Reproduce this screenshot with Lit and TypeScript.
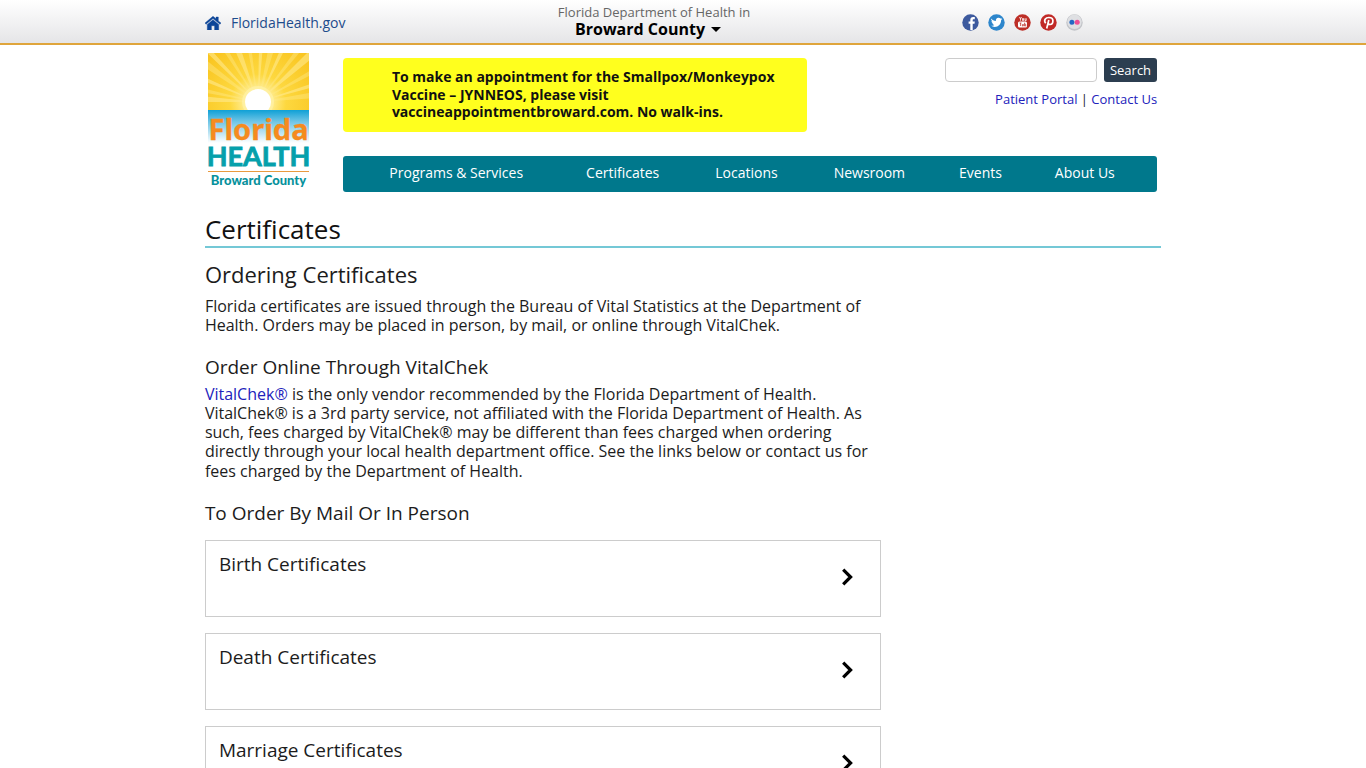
import { LitElement, html, css, svg } from "lit";
import { customElement } from "lit/decorators.js";

const sunRays = [183, 192, 203, 216, 226, 238, 249, 261, 273, 284, 295, 308, 318, 331, 343, 353].map((deg, i) => {
  const half = i % 3 === 0 ? 3 : 2;
  const p = (d: number) => {
    const t = (d * Math.PI) / 180;
    return `${50 + 120 * Math.cos(t)},${49 + 120 * Math.sin(t)}`;
  };
  return svg`<polygon points="50,49 ${p(deg - half)} ${p(deg + half)}" fill="#ffea8e" opacity=${i % 2 ? 0.4 : 0.6} />`;
});

@customElement("fh-logo")
class FhLogo extends LitElement {
  static styles = css`
    :host { display: block; }
    .logo { display: block; width: 101px; height: 138px; overflow: visible; }
    .florida { font-family: "Noto Sans", sans-serif; font-weight: 700; font-size: 29px; fill: #f58b1f; stroke: #f58b1f; stroke-width: 0.3; }
    .health { font-family: "Lato", sans-serif; font-weight: 700; font-size: 27px; fill: #05a0ab; stroke: #05a0ab; stroke-width: 0.8; }
    .county { font-family: "Lato", sans-serif; font-weight: 900; font-size: 13px; fill: #07919c; }
  `;
  render() {
    return html`<svg class="logo" viewBox="0 0 101 138" role="img" aria-label="Florida Health Broward County">
      <defs>
        <radialGradient id="sky" gradientUnits="userSpaceOnUse" cx="50" cy="49" r="70">
          <stop offset="0.15" stop-color="#fff0a0" /><stop offset="0.4" stop-color="#fdd83f" /><stop offset="1" stop-color="#f9c31d" />
        </radialGradient>
        <linearGradient id="sea" x1="0" y1="0" x2="0" y2="1">
          <stop offset="0" stop-color="#0fa0d6" /><stop offset="0.35" stop-color="#6fc5e6" /><stop offset="1" stop-color="#ffffff" />
        </linearGradient>
        <clipPath id="frame"><rect width="101" height="57" /></clipPath>
      </defs>
      <g clip-path="url(#frame)">
        <rect width="101" height="57" fill="url(#sky)" />
        ${sunRays}
        <circle cx="50" cy="49" r="16" fill="#fff3ad" opacity="0.6" />
        <circle cx="50" cy="49" r="13" fill="#fff" />
      </g>
      <rect y="57" width="101" height="33" fill="url(#sea)" />
      <text class="florida" x="50.5" y="87" text-anchor="middle">Florida</text>
      <text class="health" x="50.5" y="113" text-anchor="middle">HEALTH</text>
      <rect y="118" width="101" height="1" fill="#e99a3f" />
      <text class="county" x="50.5" y="132" text-anchor="middle">Broward County</text>
    </svg>`;
  }
}

const chevron = html`<svg class="chevron" viewBox="0 0 12 18" aria-hidden="true"><path d="M2.200 1.600 L9.600 9 L2.200 16.400" fill="none" stroke="#000" stroke-width="3.200"/></svg>`;

const social = [
  { name: "Facebook", bg: "#3d5a9e", art: svg`<path d="M8.300 16V9.800H6.600V7.400h1.700V5.900c0-1.900 1-2.900 2.900-2.900h1.600v2.300h-1.100c-.8 0-1 .3-1 .9v1.200h2.100l-.3 2.400h-1.800V16z" fill="#fff"/>` },
  { name: "Twitter", bg: "#2d86cc", art: svg`<path d="M3 4.600c1.300 1.500 3 2.300 4.900 2.400C7.500 4.900 9 3.500 10.700 3.700c.7 0 1.200.3 1.700.8l1.500-.6-.9 1.300 1.300-.3-1.200 1.300c.1 3.700-2.700 6.700-6.400 6.700-1.300 0-2.600-.4-3.600-1.100 1.200.1 2.300-.2 3.200-.9-1-.1-1.700-.7-2-1.600h.9c-1-.4-1.700-1.200-1.700-2.300l.9.300C3.300 6.600 3 5.600 3 4.600z" fill="#fff"/>` },
  { name: "YouTube", bg: "#bd2f27", art: svg`<rect x="4" y="7.500" width="9" height="6" rx="1.500" fill="#fff"/><path d="M5.500 3l1 2v1.700M7.500 3l-1 2M8.500 4.500h1v2h-1zM11 4.300v2.300h1.200V4.300" stroke="#fff" stroke-width=".8" fill="none"/><path d="M5.500 9h2M6.500 9v3M8.300 10v2h1V10M10.500 8.700V12h1.200v-1.800h-1" stroke="#bd2f27" stroke-width=".7" fill="none"/>` },
  { name: "Pinterest", bg: "#c12a27", art: svg`<path d="M6.700 14.500L8.800 6M5.700 9.200C3.300 6.200 5.500 3.500 8.900 3.500c2.400 0 4 1.300 4 3.300 0 2.200-1.200 3.700-2.900 3.700-1 0-1.600-.5-1.700-1" fill="none" stroke="#fff" stroke-width="1.700"/>` },
  { name: "Flickr", bg: "#c2c4c8", art: svg`<circle cx="8.500" cy="7.800" r="7.200" fill="#dfe0e3"/><circle cx="5.900" cy="8.300" r="2.500" fill="#2368c4"/><circle cx="11.200" cy="8.300" r="2.500" fill="#ed4f94"/>` },
];

const menu = ["Programs & Services", "Certificates", "Locations", "Newsroom", "Events", "About Us"];
const cards = ["Birth Certificates", "Death Certificates", "Marriage Certificates"];

@customElement("app-root")
class AppRoot extends LitElement {
  static styles = css`
    :host { display: block; height: 100vh; overflow: hidden; background: #fff; color: #1c1c1c; font-family: "Open Sans", sans-serif; font-size: 16px; line-height: 1.2; }
    * { box-sizing: border-box; }
    a { color: #2222bb; text-decoration: none; }
    h1, h2, h3, p { margin: 0; font-weight: 400; }
    .top { border-bottom: 2px solid #dfa53c; background: linear-gradient(#fff, #e5e5e7); }
    .wrap { width: 70%; margin: 0 auto; }
    .bar { display: grid; grid-template-columns: 1fr auto 1fr; height: 43px; }
    .home { display: flex; align-items: center; gap: 10px; font-size: 14px; line-height: 20px; color: #1d4c8c; padding-top: 3px; justify-self: start; }
    .house { width: 16px; height: 14px; }
    .county { display: flex; flex-direction: column; border: 0; padding: 4px 0 0; background: none; font: 13px/17px "Open Sans", sans-serif; color: #666; margin-right: 58px; }
    .county strong { display: flex; align-items: center; align-self: center; gap: 6px; padding-right: 12px; font-size: 16px; line-height: 17px; color: #000; }
    .caret { width: 10px; height: 5px; }
    .social { display: flex; gap: 9px; padding: 14px 78px 0 0; justify-self: end; }
    .social a { display: block; height: 17px; }
    .social svg { display: block; width: 17px; height: 17px; }
    .head { display: flex; padding: 8px 4px 0 3px; }
    .side { width: 135px; flex: none; }
    .main { flex: 1; padding-top: 5px; }
    .row { display: flex; justify-content: space-between; align-items: flex-start; }
    .alert { width: 57%; padding: 10px 24px 11px 49px; background: #ffff1e; border-radius: 4px; color: #111; font-size: 14px; line-height: 1.25; font-weight: 700; }
    .tools { text-align: right; font-size: 13px; line-height: 18px; }
    .search { display: flex; gap: 7px; margin-bottom: 8px; }
    .search input { width: 152px; height: 24px; border: 1px solid #ccc; border-radius: 4px; font: 13px "Open Sans", sans-serif; }
    .search button { height: 24px; padding: 0 6px; border: 0; border-radius: 3px; background: #2c3e50; color: #fff; font: 500 13px "Open Sans", sans-serif; }
    .nav { display: table; width: 100%; height: 36px; margin-top: 24px; padding: 0 15px 0 12px; background: #00788c; border-radius: 3px; font-size: 14px; }
    .nav a { display: table-cell; padding: 0 18px; vertical-align: middle; text-align: center; white-space: nowrap; color: #fff; font-weight: 500; }
    h1 { margin-top: 21px; padding-bottom: 1px; font-size: 26px; line-height: 32px; border-bottom: 2px solid #74c8d6; color: #111; }
    .content { width: 676px; max-width: 100%; }
    h2 { padding-top: 12px; margin-bottom: 8px; font-size: 22px; line-height: 29px; }
    h3 { margin: 20px 0 6px; font-size: 19px; line-height: 24px; }
    .list { display: grid; gap: 16px; padding-top: 9px; }
    .card { display: flex; justify-content: space-between; align-items: center; height: 77px; padding: 0 27px 2px 13px; border: 1px solid #ccc; color: #1c1c1c; font-size: 19px; line-height: 24px; }
    .card span { align-self: flex-start; padding-top: 11px; }
    .chevron { width: 12px; height: 18px; }
  `;
  render() {
    return html`
      <header class="top"><div class="wrap bar">
        <a class="home" href="#"><svg class="house" viewBox="0 0 16 14" aria-hidden="true"><path d="M0 7L8 .3 11 2.800V1h2.300v3.900L16 7l-1 1.300L8 2.600 1 8.300zM2.300 8.500L8 3.800l5.700 4.700V14H9.600V9.700H6.400V14H2.300z" fill="#0c4598" stroke="#0c4598" stroke-width=".4"/></svg>FloridaHealth.gov</a>
        <button class="county">Florida Department of Health in<strong>Broward County<svg class="caret" viewBox="0 0 10 5" aria-hidden="true"><path d="M0 0h10L5 5z"/></svg></strong></button>
        <nav class="social" aria-label="Social media">${social.map((s) => html`<a href="#" aria-label=${s.name}><svg viewBox="0 0 17 17"><circle cx="8.500" cy="8.500" r="8.200" fill=${s.bg}/>${s.art}</svg></a>`)}</nav>
      </div></header>
      <div class="wrap">
        <div class="head">
          <a class="side" href="#"><fh-logo></fh-logo></a>
          <div class="main">
            <div class="row">
              <p class="alert">To make an appointment for the Smallpox/Monkeypox Vaccine – JYNNEOS, please visit vaccineappointmentbroward.com. No walk-ins.</p>
              <div class="tools">
                <form class="search"><input type="text" aria-label="Search" /><button type="button">Search</button></form>
                <a href="#">Patient Portal</a> | <a href="#">Contact Us</a>
              </div>
            </div>
            <nav class="nav">${menu.map((m) => html`<a href="#">${m}</a>`)}</nav>
          </div>
        </div>
        <h1>Certificates</h1>
        <main class="content">
          <h2>Ordering Certificates</h2>
          <p>Florida certificates are issued through the Bureau of Vital Statistics at the Department of Health. Orders may be placed in person, by mail, or online through VitalChek.</p>
          <h3>Order Online Through VitalChek</h3>
          <p><a href="#">VitalChek®</a> is the only vendor recommended by the Florida Department of Health. VitalChek® is a 3rd party service, not affiliated with the Florida Department of Health. As such, fees charged by VitalChek® may be different than fees charged when ordering directly through your local health department office. See the links below or contact us for fees charged by the Department of Health.</p>
          <h3>To Order By Mail Or In Person</h3>
          <div class="list">${cards.map((c) => html`<a class="card" href="#"><span>${c}</span>${chevron}</a>`)}</div>
        </main>
      </div>`;
  }
}
